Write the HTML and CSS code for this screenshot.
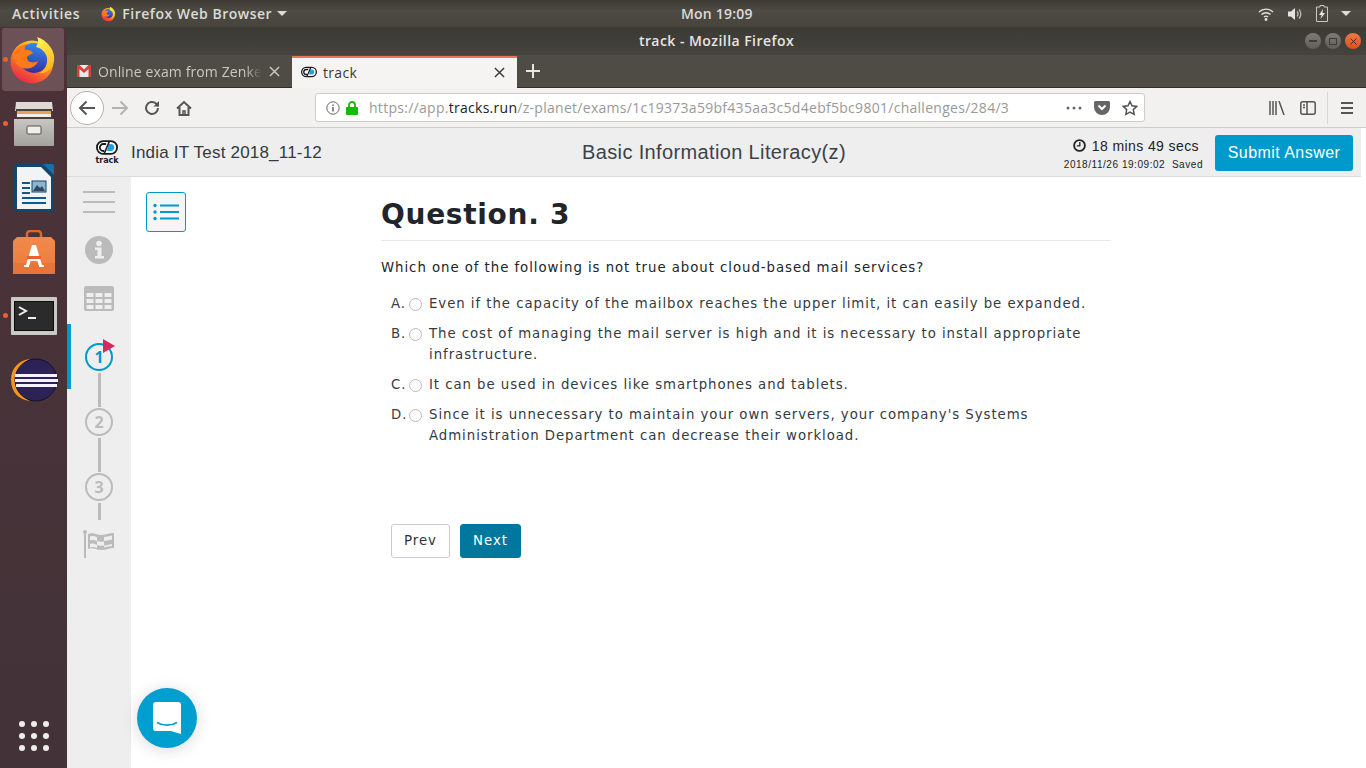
FILE: index.html
```html
<!DOCTYPE html>
<html lang="en">
<head>
    <meta charset="UTF-8">
    <title>track - Mozilla Firefox</title>
    <link rel="stylesheet" href="styles.css">
</head>
<body>
<svg class="defs" width="0" height="0">
    <defs>
        <linearGradient id="ffOuter" x1="0.8" y1="0.1" x2="0.3" y2="1">
            <stop offset="0" stop-color="#ffd430"/>
            <stop offset="0.45" stop-color="#ff8a1e"/>
            <stop offset="1" stop-color="#e8264a"/>
        </linearGradient>
        <linearGradient id="ffGlobe" x1="0.6" y1="0" x2="0.4" y2="1">
            <stop offset="0" stop-color="#2f8df0"/>
            <stop offset="1" stop-color="#3a2a9c"/>
        </linearGradient>
        <linearGradient id="ffFlame" x1="0.3" y1="0" x2="0.6" y2="1">
            <stop offset="0" stop-color="#fff44f"/>
            <stop offset="1" stop-color="#ffb01e"/>
        </linearGradient>
        <linearGradient id="filesBody" x1="0" y1="0" x2="0" y2="1">
            <stop offset="0" stop-color="#c7c6c1"/>
            <stop offset="1" stop-color="#a3a29d"/>
        </linearGradient>
        <linearGradient id="bagBody" x1="0" y1="0" x2="0" y2="1">
            <stop offset="0" stop-color="#f08a4b"/>
            <stop offset="1" stop-color="#ee7a38"/>
        </linearGradient>
        <symbol id="firefox" viewBox="0 0 48 48">
            <circle cx="23" cy="26" r="21.500" fill="url(#ffOuter)"/>
            <circle cx="25" cy="22" r="15" fill="url(#ffGlobe)"/>
            <path d="M28 1c2 4 1 7-1 10 5 1 10 5 11 11 1 7-3 13-8 15 7 1 14-4 15-12 2-10-7-21-17-24z" fill="url(#ffFlame)"/>
            <path d="M4 18c3-6 8-9 14-10-2 2-3 4-2 6 3-1 7 1 8 3-2 2-6 2-6 5 0 4 6 6 11 3-2 6-9 9-15 7C8 30 3 24 4 18z" fill="#ff7a1a"/>
        </symbol>
        <symbol id="track-mark" viewBox="0 0 24 16">
            <rect x="1" y="1" width="22" height="14" rx="7" fill="#fff" stroke="#1b1b1b" stroke-width="2"/>
            <path d="M11 4.200H8a3.800 3.800 0 0 0 0 7.600h1" fill="none" stroke="#1b1b1b" stroke-width="2"/>
            <path d="M14 4.200h2a3.800 3.800 0 0 1 0 7.600h-4z" fill="#1ea2dc"/>
            <path d="M14.500 1.500 9 14.500" stroke="#1b1b1b" stroke-width="1.800"/>
        </symbol>
        <symbol id="close-x" viewBox="0 0 12 12">
            <path d="M1 1l10 10M11 1 1 11" fill="none" stroke="currentColor" stroke-width="1.600"/>
        </symbol>
    </defs>
</svg>

<div class="topbar">
    <span class="topbar-item activities">Activities</span>
    <span class="topbar-item appmenu">
        <svg class="appmenu-icon"><use href="#firefox"/></svg>
        Firefox Web Browser
        <i class="caret"></i>
    </span>
    <span class="clock">Mon 19:09</span>
    <span class="tray">
        <svg width="16" height="14" viewBox="0 0 16 14" fill="none" stroke="#e4e3de" stroke-width="1.400">
            <path d="M1 5a10 10 0 0 1 14 0M3.500 7.500a6.500 6.500 0 0 1 9 0M6 10a3 3 0 0 1 4 0"/>
            <circle cx="8" cy="12.500" r="1.400" fill="#e4e3de" stroke="none"/>
        </svg>
        <svg width="16" height="14" viewBox="0 0 16 14">
            <path d="M1 4.500h3L8 1v12L4 9.500H1z" fill="#e4e3de"/>
            <path d="M10 4.500a3.500 3.500 0 0 1 0 5M12 2.500a6.500 6.500 0 0 1 0 9" fill="none" stroke="#bdbcb6" stroke-width="1.300"/>
        </svg>
        <svg width="12" height="17" viewBox="0 0 12 17">
            <path d="M4 .5h4V2h3.500v14.500H.5V2H4z" fill="none" stroke="#c9c8c2" stroke-width="1"/>
            <path d="M7 4 3 10h2.500L4.500 14 9 8H6.500z" fill="#e4e3de"/>
        </svg>
        <i class="caret"></i>
    </span>
</div>

<div class="desktop">
    <nav class="dock">
        <div class="dock-list">
            <div class="dock-item active running">
                <svg width="48" height="48"><use href="#firefox"/></svg>
            </div>
            <div class="dock-item running">
                <svg width="42" height="46" viewBox="0 0 42 46">
                    <path d="M3 1h36l1 9H2z" fill="#dcdbd6"/>
                    <rect x="3" y="8" width="36" height="10" fill="#4c4038"/>
                    <rect x="4" y="10" width="34" height="3" fill="#e8a25e"/>
                    <rect x="4" y="13" width="34" height="3" fill="#f3efe6"/>
                    <path d="M1 18h40v26a1 1 0 0 1-1 1H2a1 1 0 0 1-1-1z" fill="url(#filesBody)"/>
                    <rect x="14" y="25" width="14" height="8" rx="1" fill="#efeeea" stroke="#55534e"/>
                </svg>
            </div>
            <div class="dock-item">
                <svg width="40" height="48" viewBox="0 0 40 48">
                    <rect width="40" height="48" rx="3" fill="#12466d"/>
                    <path d="M3 3h24l10 10v32H3z" fill="#f1f3f4"/>
                    <path d="M29 0 40 11V2a2 2 0 0 0-2-2z" fill="#1a6fa8"/>
                    <path d="M8 18h8v2H8zM8 23h8v2H8zM8 28h8v2H8zM8 33h24v2H8zM8 38h24v2H8z" fill="#12588c"/>
                    <rect x="18" y="17" width="14" height="11" fill="#8fb4cf" stroke="#12466d"/>
                    <path d="M19 27l4-6 3 3 2-2 3 5z" fill="#31475a"/>
                </svg>
            </div>
            <div class="dock-item">
                <svg width="42" height="44" viewBox="0 0 42 44">
                    <path d="M14 9V4a3 3 0 0 1 3-3h8a3 3 0 0 1 3 3v5" fill="none" stroke="#d9682f" stroke-width="2.500"/>
                    <path d="M4 7h34l4 4v33H0V11z" fill="url(#bagBody)"/>
                    <path d="M0 33h42v11H0z" fill="#e8743a"/>
                    <path d="M19 15h4l6 20h2v2H26v-2h-.5l-1-4h-7l-1 4H16v2H11v-2h2z" fill="#fff"/>
                    <rect x="14" y="26" width="14" height="3" fill="#ea5f2c"/>
                </svg>
            </div>
            <div class="dock-item running">
                <svg width="46" height="38" viewBox="0 0 46 38">
                    <rect width="46" height="38" rx="1" fill="#c9c9c5"/>
                    <rect x="3.500" y="4.500" width="39" height="29" fill="#2a2b2a" stroke="#0d0d0d"/>
                    <path d="M8 10l7 4-7 4" fill="none" stroke="#f0f0ee" stroke-width="2"/>
                    <rect x="17" y="20" width="8" height="2" fill="#f0f0ee"/>
                </svg>
            </div>
            <div class="dock-item">
                <svg width="50" height="44" viewBox="0 0 50 44">
                    <path d="M21 1C10 2 2 10 2 22s8 20 19 21C13 38 9 31 9 22S13 6 21 1z" fill="#f7941e"/>
                    <circle cx="27" cy="22" r="21" fill="#2c2255" stroke="#15122e"/>
                    <path d="M6 16h42v3H6zM6 21h43v3H6zM7 26h41v3H7z" fill="#f4f3f8"/>
                </svg>
            </div>
        </div>
        <div class="app-grid">
            <i></i><i></i><i></i><i></i><i></i><i></i><i></i><i></i><i></i>
        </div>
    </nav>

    <div class="window">
        <div class="titlebar">
            <span class="title-text">track - Mozilla Firefox</span>
            <span class="winbtns">
                <span class="winbtn"><i class="win-min"></i></span>
                <span class="winbtn"><i class="win-max"></i></span>
                <span class="winbtn close"><svg width="7" height="7"><use href="#close-x"/></svg></span>
            </span>
        </div>

        <div class="tabbar">
            <div class="tab">
                <svg width="14" height="12" viewBox="0 0 14 12">
                    <rect width="14" height="12" fill="#e8e8e6"/>
                    <path d="M0 0h2.500L7 4.500 11.500 0H14v12h-2.500V4L7 8 2.500 4v8H0z" fill="#d4423a"/>
                </svg>
                <span class="tab-label">Online exam from Zenke</span>
                <svg class="tab-close" width="11" height="11"><use href="#close-x"/></svg>
            </div>
            <div class="tab current">
                <svg width="16" height="12"><use href="#track-mark"/></svg>
                <span class="tab-label">track</span>
                <svg class="tab-close" width="11" height="11"><use href="#close-x"/></svg>
            </div>
            <svg class="newtab" width="14" height="14" viewBox="0 0 14 14" fill="#e6e5e0">
                <rect x="6" width="2" height="14"/><rect y="6" width="14" height="2"/>
            </svg>
        </div>

        <div class="navbar">
            <span class="back-btn">
                <svg width="18" height="16" viewBox="0 0 18 16" fill="none" stroke="#555" stroke-width="2">
                    <path d="M17 8H2M8.500 1.500 2 8l6.500 6.500"/>
                </svg>
            </span>
            <svg class="forward" width="17" height="16" viewBox="0 0 17 16" fill="none" stroke="#b5b3b0" stroke-width="2">
                <path d="M0 8h15M8.500 1.500 15 8l-6.500 6.500"/>
            </svg>
            <svg class="reload" width="16" height="16" viewBox="0 0 16 16" fill="none" stroke="#555" stroke-width="2">
                <path d="M14 8a6 6 0 1 1-2-4.500L14.500 6"/>
                <path d="M15 1v5.500H9.500z" fill="#555" stroke="none"/>
            </svg>
            <svg class="home" width="16" height="16" viewBox="0 0 16 16" fill="none" stroke="#555" stroke-width="2">
                <path d="M1 8.500 8 2l7 6.500M3.500 7v8h9V7"/>
                <path d="M7 15v-4h2v4" stroke-width="1.500"/>
            </svg>
            <div class="urlbar">
                <svg width="14" height="14" viewBox="0 0 14 14" fill="none" stroke="#666">
                    <circle cx="7" cy="7" r="6.200"/>
                    <path d="M7 6v4.500M7 3.500v1.500" stroke-width="1.500"/>
                </svg>
                <svg class="lock" width="12" height="14" viewBox="0 0 12 14">
                    <path d="M3 6V4a3 3 0 0 1 6 0v2" fill="none" stroke="#12bc00" stroke-width="1.800"/>
                    <rect y="6" width="12" height="8" rx="1" fill="#12bc00"/>
                </svg>
                <span class="url"><span>https://app.</span><b>tracks.run</b><span>/z-planet/exams/1c19373a59bf435aa3c5d4ebf5bc9801/challenges/284/3</span></span>
                <span class="url-actions">
                    <svg width="16" height="4" viewBox="0 0 16 4" fill="#666"><circle cx="2" cy="2" r="1.500"/><circle cx="8" cy="2" r="1.500"/><circle cx="14" cy="2" r="1.500"/></svg>
                    <svg width="16" height="14" viewBox="0 0 16 14">
                        <path d="M1.500 0h13A1.500 1.500 0 0 1 16 1.500V6A8 8 0 0 1 0 6V1.500A1.500 1.500 0 0 1 1.500 0z" fill="#666"/>
                        <path d="M4.500 4.500 8 8l3.500-3.500" fill="none" stroke="#fff" stroke-width="2"/>
                    </svg>
                    <svg width="16" height="16" viewBox="0 0 16 16">
                        <path d="M8 1.500l2 4.300 4.700.6-3.400 3.200.9 4.700L8 12l-4.200 2.300.9-4.700L1.300 6.400 6 5.800z" fill="none" stroke="#555" stroke-width="1.500"/>
                    </svg>
                </span>
            </div>
            <span class="nav-right">
                <svg width="16" height="14" viewBox="0 0 16 14" fill="none" stroke="#555" stroke-width="1.500">
                    <path d="M1 0v14M4 0v14M7 0v14M10 0l5 14"/>
                </svg>
                <svg class="nav-panel" width="16" height="14" viewBox="0 0 16 14" fill="none" stroke="#555" stroke-width="1.500">
                    <rect x=".8" y=".8" width="14.400" height="12.400" rx="2"/>
                    <path d="M7 1v12M3 4h2M3 6.500h2" />
                </svg>
                <i class="nav-sep"></i>
                <svg class="nav-burger" width="12" height="12" viewBox="0 0 12 12" fill="#555">
                    <rect width="12" height="2"/><rect y="5" width="12" height="2"/><rect y="10" width="12" height="2"/>
                </svg>
            </span>
        </div>

        <header class="exam-head">
            <div class="exam-brand">
                <span class="logo">
                    <svg width="22" height="15"><use href="#track-mark"/></svg>
                    <span class="logo-word">track</span>
                </span>
                <span class="exam-name">India IT Test 2018_11-12</span>
            </div>
            <div class="exam-section">Basic Information Literacy(z)</div>
            <div class="exam-right">
                <div class="timer">
                    <div class="timer-left">
                        <svg width="13" height="13" viewBox="0 0 13 13" fill="none" stroke="#222" stroke-width="1.800">
                            <circle cx="6.500" cy="6.500" r="5.400"/>
                            <path d="M6.800 3v3.800H3.800" stroke-width="1.300"/>
                        </svg>
                        18 mins 49 secs
                    </div>
                    <div class="saved">2018/11/26 19:09:02&nbsp; Saved</div>
                </div>
                <button class="btn-submit">Submit Answer</button>
            </div>
        </header>

        <div class="exam-body">
            <aside class="side">
                <svg class="side-menu" width="32" height="23" viewBox="0 0 32 23" fill="#bbb">
                    <rect width="32" height="2"/><rect y="10" width="32" height="2"/><rect y="20" width="32" height="2"/>
                </svg>
                <svg class="side-info" width="28" height="28" viewBox="0 0 28 28">
                    <circle cx="14" cy="14" r="14" fill="#bbb"/>
                    <circle cx="14" cy="7.500" r="2.800" fill="#eee"/>
                    <path d="M10 11.500h6.500V20H19v2.500H10V20h2.500v-6H10z" fill="#eee"/>
                </svg>
                <svg class="side-table" width="30" height="25" viewBox="0 0 30 25">
                    <rect width="30" height="25" rx="2" fill="#bbb"/>
                    <path d="M2.500 7h7v4h-7zM11.500 7h7v4h-7zM20.500 7h7v4h-7zM2.500 13h7v4h-7zM11.500 13h7v4h-7zM20.500 13h7v4h-7zM2.500 19h7v4h-7zM11.500 19h7v4h-7zM20.500 19h7v4h-7z" fill="#eee"/>
                </svg>
                <div class="step active">
                    <span class="step-num">1</span>
                    <i class="step-line"></i>
                </div>
                <div class="step">
                    <span class="step-num">2</span>
                    <i class="step-line"></i>
                </div>
                <div class="step last">
                    <span class="step-num">3</span>
                    <i class="step-line"></i>
                </div>
                <svg class="side-flag" width="32" height="28" viewBox="0 0 32 28">
                    <path d="M2 1v27" stroke="#bbb" stroke-width="2"/>
                    <circle cx="2" cy="2" r="2" fill="#bbb"/>
                    <path d="M5 4c5-2 8 1 13 1s8-2 13-2v15c-5 0-8 2-13 2S10 17 5 19z" fill="#bbb"/>
                    <path d="M7 6.500c3-1 5 0 7 .5v4c-2-.5-4-1.500-7-.5zM21 7c2 0 5-1 8-1.500v4c-3 .5-6 1.500-8 1.500zM14 11c2 .5 5 1 7 .5v4c-2 .5-5 0-7-.5zM7 14c3-1 5 0 7 1v3c-2-1-4-1.500-7-.5zM21 15.500c3-.5 5-1 8-1.500v2c-3 0-5 1-8 1.500z" fill="#eee"/>
                </svg>
            </aside>

            <main class="main">
                <button class="list-toggle">
                    <svg width="26" height="18" viewBox="0 0 26 18" fill="#0099cc">
                        <circle cx="2" cy="2.500" r="1.700"/><circle cx="2" cy="9" r="1.700"/><circle cx="2" cy="15.500" r="1.700"/>
                        <rect x="7" y="1.500" width="19" height="2"/><rect x="7" y="8" width="19" height="2"/><rect x="7" y="14.500" width="19" height="2"/>
                    </svg>
                </button>
                <section class="question">
                    <h1>Question. 3</h1>
                    <p class="q-text">Which one of the following is not true about cloud-based mail services?</p>
                    <div class="option">
                        <span class="opt-key">A.</span><i class="radio"></i>
                        <span class="opt-text">Even if the capacity of the mailbox reaches the upper limit, it can easily be expanded.</span>
                    </div>
                    <div class="option">
                        <span class="opt-key">B.</span><i class="radio"></i>
                        <span class="opt-text">The cost of managing the mail server is high and it is necessary to install appropriate infrastructure.</span>
                    </div>
                    <div class="option">
                        <span class="opt-key">C.</span><i class="radio"></i>
                        <span class="opt-text">It can be used in devices like smartphones and tablets.</span>
                    </div>
                    <div class="option">
                        <span class="opt-key">D.</span><i class="radio"></i>
                        <span class="opt-text">Since it is unnecessary to maintain your own servers, your company's Systems Administration Department can decrease their workload.</span>
                    </div>
                    <div class="pager">
                        <button class="btn-prev">Prev</button>
                        <button class="btn-next">Next</button>
                    </div>
                </section>
            </main>
        </div>
    </div>
</div>

<div class="chat">
    <svg width="28" height="32" viewBox="0 0 28 32">
        <path d="M3 0h22a3 3 0 0 1 3 3v29l-10-3H3a3 3 0 0 1-3-3V3a3 3 0 0 1 3-3z" fill="#fff"/>
        <path d="M4 20.500c6 3.500 14 3.500 20 0" fill="none" stroke="#009fcf" stroke-width="1.800"/>
    </svg>
</div>
</body>
</html>
```

FILE: styles.css
```css
* {
    box-sizing: border-box;
}
html, body {
    margin: 0;
    height: 100%;
    overflow: hidden;
}
body {
    font-family: "DejaVu Sans", sans-serif;
    background: #fff;
    color: #212529;
}
button {
    font-family: inherit;
    cursor: pointer;
}
.defs {
    position: absolute;
}

/* ubuntu top bar */
.topbar {
    height: 27px;
    display: flex;
    align-items: center;
    position: relative;
    background: linear-gradient(#3d3a35, #4e4b45 40%, #47443e);
    color: #dcdbd5;
    font-family: "Open Sans", sans-serif;
    font-size: 14px;
    font-weight: 600;
    letter-spacing: .7px;
}
.activities {
    margin-left: 12px;
}
.appmenu {
    display: flex;
    align-items: center;
    margin-left: 21px;
    letter-spacing: .5px;
}
.appmenu-icon {
    width: 15px;
    height: 16px;
    margin-right: 6px;
}
.caret {
    display: inline-block;
    margin-left: 5px;
    border-left: 5px solid transparent;
    border-right: 5px solid transparent;
    border-top: 5px solid #dcdbd5;
}
.clock {
    position: absolute;
    left: 681px;
    letter-spacing: .2px;
}
.tray {
    margin-left: auto;
    margin-right: 15px;
    display: flex;
    align-items: center;
    gap: 13px;
}
.tray .caret {
    margin-left: 0;
}

.desktop {
    height: 741px;
    display: flex;
}

/* launcher */
.dock {
    width: 67px;
    flex: none;
    display: flex;
    flex-direction: column;
    justify-content: space-between;
    background: linear-gradient(#4c3239, #423338);
}
.dock-list {
    padding-top: 1px;
}
.dock-item {
    height: 64px;
    display: flex;
    align-items: center;
    justify-content: center;
    position: relative;
}
.dock-item.active {
    height: 63px;
    margin: 0 3px 1px 2px;
    border-radius: 3px;
    background: #6c5156;
}
.dock-item.running::before {
    content: "";
    position: absolute;
    left: 3px;
    top: 50%;
    width: 5px;
    height: 5px;
    margin-top: -3px;
    border-radius: 50%;
    background: #e9622b;
}
.dock-item.active::before {
    left: 1px;
}
.app-grid {
    display: grid;
    grid-template-columns: repeat(3, 6px);
    gap: 6px;
    justify-content: center;
    padding-bottom: 17px;
}
.app-grid i {
    width: 6px;
    height: 6px;
    border-radius: 50%;
    background: #f0eeec;
}

/* firefox chrome */
.window {
    flex: 1;
    min-width: 0;
    display: flex;
    flex-direction: column;
}
.titlebar {
    height: 28px;
    flex: none;
    display: flex;
    align-items: center;
    justify-content: center;
    position: relative;
    padding-bottom: 1px;
    background: linear-gradient(#3c3a35, #45433d);
    color: #e6e5e0;
    font-family: "Open Sans", sans-serif;
    font-size: 14px;
    font-weight: 600;
    letter-spacing: .45px;
}
.winbtns {
    position: absolute;
    right: 5px;
    top: 6px;
    display: flex;
    gap: 4px;
}
.winbtn {
    width: 16px;
    height: 16px;
    border-radius: 50%;
    display: flex;
    align-items: center;
    justify-content: center;
    background: linear-gradient(#7d7b74, #5f5d57);
}
.winbtn.close {
    background: linear-gradient(#f07746, #d9501e);
    color: #3c2a20;
}
.win-min {
    width: 8px;
    height: 2px;
    background: #3f3d38;
}
.win-max {
    width: 8px;
    height: 7px;
    border: 1px solid #3f3d38;
}
.tabbar {
    height: 33px;
    flex: none;
    display: flex;
    align-items: flex-end;
    background: #4f4c45;
    border-bottom: 1px solid #2f2e2a;
    font-family: "Open Sans", sans-serif;
    font-size: 14px;
}
.tab {
    width: 222px;
    height: 32px;
    display: flex;
    align-items: center;
    gap: 7px;
    padding: 0 9px 0 10px;
    color: #c9c8c2;
}
.tab-label {
    flex: 1;
    min-width: 0;
    white-space: nowrap;
    letter-spacing: .12px;
    -webkit-mask-image: linear-gradient(to right, #000 90%, transparent);
    mask-image: linear-gradient(to right, #000 90%, transparent);
}
.tab-close {
    flex: none;
}
.tab.current {
    width: 225px;
    height: 32px;
    margin: 0 0 -1px 3px;
    padding: 0 12px 2px 9px;
    gap: 6px;
    background: #f5f4f3;
    border-top: 2px solid #e8764f;
    color: #3a3a38;
}
.current .tab-label {
    letter-spacing: .3px;
    -webkit-mask-image: none;
    mask-image: none;
}
.newtab {
    margin: 0 0 9px 9px;
}
.navbar {
    height: 40px;
    flex: none;
    display: flex;
    align-items: center;
    position: relative;
    background: #f2f1ef;
    border-bottom: 1px solid #cfcdca;
}
.back-btn {
    width: 34px;
    height: 34px;
    margin-left: 3px;
    flex: none;
    display: flex;
    align-items: center;
    justify-content: center;
    border-radius: 50%;
    background: #fff;
    border: 1px solid #b5b3b0;
}
.forward {
    margin-left: 8px;
}
.reload {
    margin-left: 15px;
}
.home {
    margin-left: 16px;
}
.urlbar {
    width: 830px;
    height: 29px;
    margin-left: 123px;
    flex: none;
    display: flex;
    align-items: center;
    padding: 0 6px 0 10px;
    background: #fff;
    border: 1px solid #cfcdca;
    border-radius: 3px;
    font-family: "Open Sans", sans-serif;
    font-size: 14px;
    letter-spacing: .28px;
}
.lock {
    margin-left: 6px;
}
.url {
    margin-left: 11px;
    color: #999;
    white-space: nowrap;
}
.url b {
    font-weight: 400;
    color: #222;
}
.url-actions {
    margin-left: auto;
    display: flex;
    align-items: center;
    gap: 12px;
}
.nav-right {
    margin-left: 124px;
    display: flex;
    align-items: center;
}
.nav-panel {
    margin-left: 15px;
}
.nav-sep {
    width: 1px;
    height: 32px;
    margin-left: 11px;
    background: #d8d6d3;
}
.nav-burger {
    margin-left: 13px;
}

/* exam header */
.exam-head {
    height: 49px;
    flex: none;
    display: grid;
    grid-template-columns: 1fr auto 1fr;
    align-items: center;
    margin-right: 5px;
    padding: 1px 8px 0 29px;
    background: #eee;
    border-bottom: 1px solid #ddd;
}
.exam-brand {
    display: flex;
    align-items: center;
    gap: 13px;
}
.logo {
    display: flex;
    flex-direction: column;
    align-items: center;
    width: 22px;
}
.logo-word {
    margin-top: 1px;
    font-size: 8px;
    line-height: 9px;
    font-weight: 700;
    color: #222;
}
.exam-name {
    font-family: "Liberation Sans", sans-serif;
    font-size: 17px;
    letter-spacing: .2px;
    color: #343a40;
}
.exam-section {
    margin-right: 21px;
    font-family: "Liberation Sans", sans-serif;
    font-size: 20px;
    letter-spacing: .36px;
    color: #3c4248;
}
.exam-right {
    display: flex;
    align-items: center;
    justify-content: flex-end;
    gap: 12px;
}
.timer {
    padding-top: 2px;
    font-family: "Liberation Sans", sans-serif;
    color: #222;
}
.timer-left {
    display: flex;
    align-items: center;
    justify-content: flex-end;
    gap: 6px;
    margin-right: 4px;
    font-size: 14px;
    letter-spacing: .4px;
}
.saved {
    margin-top: 5px;
    font-size: 10px;
    letter-spacing: .55px;
}
.btn-submit {
    width: 138px;
    height: 36px;
    border: 0;
    border-radius: 3px;
    background: #0099cc;
    color: #fff;
    font-family: "Liberation Sans", sans-serif;
    font-size: 16px;
    letter-spacing: .45px;
}

/* exam body */
.exam-body {
    flex: 1;
    min-height: 0;
    display: flex;
}
.side {
    width: 64px;
    flex: none;
    display: flex;
    flex-direction: column;
    align-items: center;
    padding-top: 14px;
    background: #eee;
}
.side-info {
    margin-top: 22px;
}
.side-table {
    margin-top: 22px;
}
.step {
    height: 65px;
    display: flex;
    flex-direction: column;
    align-items: center;
    position: relative;
}
.side .step:first-of-type {
    margin-top: 31px;
}
.step-num {
    width: 28px;
    height: 28px;
    flex: none;
    margin-top: 1px;
    display: flex;
    align-items: center;
    justify-content: center;
    border: 2px solid #bbb;
    border-radius: 50%;
    color: #bbb;
    font-family: "Open Sans", sans-serif;
    font-size: 16px;
    font-weight: 700;
}
.step-line {
    width: 3px;
    height: 34px;
    margin-top: 2px;
    background: #bbb;
}
.step.last {
    height: 48px;
}
.step.last .step-line {
    height: 18px;
}
.step.active .step-num {
    border-color: #0099cc;
    color: #0099cc;
}
/* blue marker on the left and the red flag over the circle */
.step.active::before {
    content: "";
    position: absolute;
    left: -18px;
    top: -18px;
    width: 4px;
    height: 65px;
    background: #0099cc;
}
.step.active::after {
    content: "";
    position: absolute;
    left: 18px;
    top: -3px;
    border-left: 12px solid #d6285e;
    border-top: 7px solid transparent;
    border-bottom: 7px solid transparent;
}
.side-flag {
    margin-top: 10px;
}
.main {
    flex: 1;
    min-width: 0;
    display: flex;
    padding: 15px 0 0 15px;
}
.list-toggle {
    width: 40px;
    height: 40px;
    flex: none;
    display: flex;
    align-items: center;
    justify-content: center;
    padding: 0;
    background: #f5f5f5;
    border: 1px solid #0099cc;
    border-radius: 3px;
}
.question {
    width: 730px;
    margin-left: 195px;
    font-size: 13.3px;
    letter-spacing: .95px;
    line-height: 20.8px;
}
.question h1 {
    margin: 0;
    height: 49px;
    padding-top: 4px;
    border-bottom: 1px solid #e8e8e8;
    font-size: 28px;
    line-height: 38px;
    letter-spacing: .7px;
}
.q-text {
    margin: 16.6px 0 16px;
}
.option {
    display: flex;
    margin: 0 0 9.2px 10px;
    position: relative;
}
.opt-key {
    width: 19px;
    flex: none;
    color: #3a4047;
}
.radio {
    width: 13px;
    height: 13px;
    flex: none;
    margin: 3.500px 6px 0 -1px;
    border: 1px solid #bbb;
    border-radius: 50%;
    background: #fff;
}
.opt-text {
    margin-left: 1px;
    color: #343a40;
}
.pager {
    display: flex;
    gap: 10px;
    margin: 77.4px 0 0 10px;
}
.btn-prev, .btn-next {
    height: 34px;
    padding: 0 0 2px;
    border-radius: 3px;
    font-size: 13.3px;
    letter-spacing: 1px;
}
.btn-prev {
    width: 59px;
    background: #fff;
    border: 1px solid #ccc;
    color: #333;
}
.btn-next {
    width: 61px;
    background: #00789e;
    border: 1px solid #00789e;
    color: #fff;
}
.chat {
    position: fixed;
    left: 137px;
    top: 688px;
    width: 60px;
    height: 60px;
    display: flex;
    align-items: center;
    justify-content: center;
    border-radius: 50%;
    background: #009fcf;
    box-shadow: 0 2px 16px rgba(0, 0, 0, .15);
}
```
